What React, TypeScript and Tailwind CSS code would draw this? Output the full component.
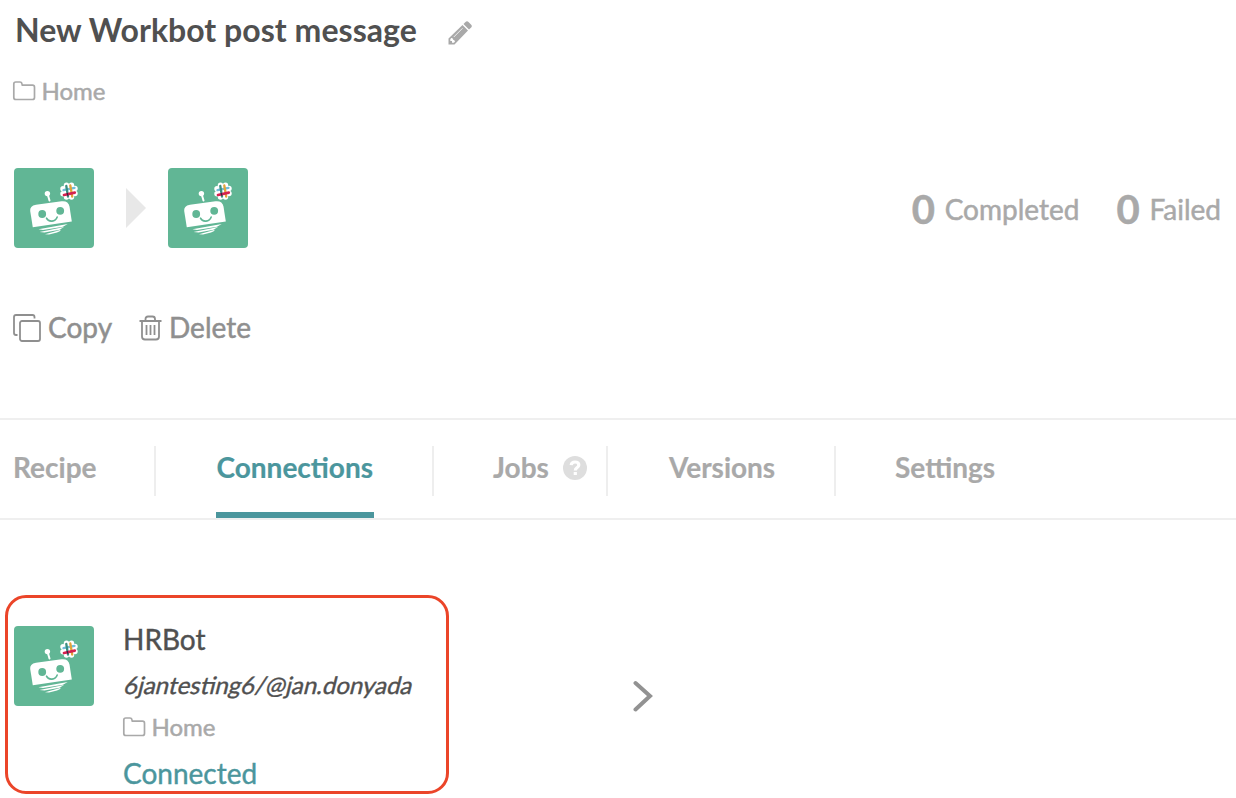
import type { ReactNode } from "react";

function BotIcon() {
  return (
    <svg viewBox="0 0 80 80" className="block size-20 shrink-0 rounded bg-[#61b695]">
      <path fill="#fff" d="M16.200 43Q15.500 38 22 36.800L47.500 33.300Q54.200 32.500 55.500 38.500L57.800 53.500L18.800 59.300Z" />
      <circle cx="33.400" cy="25.600" r="2.700" fill="#fff" />
      <path d="M33.600 26L35.500 32.500" stroke="#fff" strokeWidth="2" strokeLinecap="round" />
      <circle cx="28.200" cy="46" r="3.900" fill="#61b695" />
      <circle cx="46.200" cy="42.800" r="3.900" fill="#61b695" />
      <path d="M32.500 50.200C34.500 54.500 41.500 54 43.200 49" stroke="#61b695" strokeWidth="1.600" fill="none" strokeLinecap="round" />
      <path fill="#fff" d="M24.500 61.300L53.700 56.100L49 58.700L29 62ZM25.500 63.900L50 59L45.500 61.700L30.500 64.500ZM31 66.300L47 61.800Q46.500 63.300 43 64.500L35 66.600Z" />
      <g fill="#fff">
        <circle cx="55" cy="23.200" r="6.500" />
        <circle cx="52.500" cy="17.300" r="2.700" />
        <circle cx="57.500" cy="17.200" r="2.700" />
        <circle cx="61" cy="20.500" r="2.700" />
        <circle cx="61" cy="25.500" r="2.700" />
        <circle cx="57.500" cy="29" r="2.700" />
        <circle cx="52.500" cy="29" r="2.700" />
        <circle cx="49" cy="25.800" r="2.700" />
        <circle cx="49" cy="20.800" r="2.700" />
      </g>
      <g strokeWidth="2.300" fill="none" strokeLinecap="round">
        <path d="M49.500 22.200L60.500 19.800" stroke="#72bddb" />
        <path d="M52.300 18L54 28.500" stroke="#3b8f80" />
        <path d="M56.300 17.500L58.200 28.500" stroke="#e0a43b" />
        <path d="M50 27L60.800 24.600" stroke="#d52350" strokeWidth="2.700" />
        <path d="M52.800 26.400L54.200 26.100" stroke="#422047" strokeWidth="2.700" strokeLinecap="butt" />
      </g>
    </svg>
  );
}

function Folder() {
  return (
    <svg viewBox="0 0 24 20" className="mt-px block h-5 w-6 shrink-0" fill="none" stroke="#a9a9a9" strokeWidth="1.700">
      <path d="M1.800 16.500V3Q1.800 1 3.800 1H8Q9.500 1 9.800 2.300L10.300 4.200H20.500Q22.500 4.200 22.500 6.200V16.500Q22.500 18.500 20.500 18.500H3.800Q1.800 18.500 1.800 16.500Z" />
    </svg>
  );
}

function Home() {
  return (
    <div className="flex h-8 items-center text-[#a9a9a9]">
      <Folder />
      <span className="ml-[5.5px] pt-[2px] text-[24px] leading-8 [-webkit-text-stroke:0.5px]">Home</span>
    </div>
  );
}

function Tab({ children, className }: { children: ReactNode; className: string }) {
  return <div className={`flex h-[50px] shrink-0 items-center border-[#eee] ${className}`}>{children}</div>;
}

export default function App() {
  return (
    <main className="h-[798px] w-[1236px] overflow-hidden bg-white font-['Lato',sans-serif] text-[28px] whitespace-nowrap text-[#a9a9a9]">
      <header className="flex h-[60px] items-center pl-[15px]">
        <h1 className="w-[433px] text-[32px] leading-[40px] font-bold tracking-[0.04px] text-[#505050] [font-variant-ligatures:common-ligatures]">New Workbot post message</h1>
        <svg viewBox="0 0 24 24" className="mt-[5px] block size-6" fill="#a9a9a9">
          <path d="M17.500 1Q19 -.3 20.500 1L23.200 3.700Q24.500 5 23.200 6.500L21 8.500L15.500 3ZM14.500 4L20 9.500L6.500 23.500H0.500V17.500ZM3.200 17L2.300 18.200V20H4V21.700H5.800L7 20.700Q6.500 18.500 5 18.800Q5.200 17 3.200 17Z" fillRule="evenodd" />
          <path d="M5.800 16L14.500 7.300" stroke="#fff" strokeWidth=".8" />
        </svg>
      </header>
      <div className="flex h-[60px] items-center pl-3"><Home /></div>
      <section className="mt-[48px] flex h-20 items-center pr-[15px] pl-[14px]">
        <BotIcon />
        <svg viewBox="0 0 20 40" className="mr-[22px] ml-8 block h-10 w-5"><path d="M0 0L20 20L0 40Z" fill="#e8e8e8" /></svg>
        <BotIcon />
        <div className="ml-auto flex items-center pt-[2px] [-webkit-text-stroke:0.5px]">
          <b className="w-[33px] text-[40px] leading-[48px]">0</b>
          <span className="mr-[37px] leading-9">Completed</span>
          <b className="w-[33px] text-[40px] leading-[48px]">0</b>
          <span className="leading-9">Failed</span>
        </div>
      </section>
      <section className="mt-[60px] flex h-10 items-center pl-3 text-[#8f8f8f]">
        <svg viewBox="0 0 30 30" className="block size-[30px]" fill="none" stroke="currentColor" strokeWidth="1.800">
          <rect x="8" y="8" width="20" height="20" rx="2" />
          <path d="M5.500 22H4Q2 22 2 20V4Q2 2 4 2H20.500Q22.500 2 22.500 4V5.500" />
        </svg>
        <span className="-mt-[2px] ml-[6px] w-[90px] leading-9 [-webkit-text-stroke:0.5px]">Copy</span>
        <svg viewBox="0 0 24 26" className="block h-[26px] w-6" fill="none" stroke="currentColor" strokeWidth="1.800">
          <path d="M1.500 6H23.500M7.500 6V4Q7.500 1.500 10 1.500H14.500Q17 1.500 17 4V6M4 6V21.500Q4 24.500 7 24.500H18Q21 24.500 21 21.500V6M8.500 10V20M12.500 10V20M16.500 10V20" />
        </svg>
        <span className="-mt-[2px] ml-[7px] leading-9 [-webkit-text-stroke:0.5px]">Delete</span>
      </section>
      <nav className="mt-[70px] flex h-[102px] items-start border-y-2 border-[#efefef] pt-[26px] font-bold [-webkit-text-stroke:0.2px]">
        <Tab className="w-[156px] border-r-2 pb-[8px] pl-[13px]">Recipe</Tab>
        <Tab className="w-[278px] border-r-2 pl-[60px]">
          <span className="-mt-[4px] flex h-[98px] w-[158px] items-center border-b-[6px] border-[#4b969d] pt-[2px] pl-[0.5px] text-[#4b969d]">Connections</span>
        </Tab>
        <Tab className="w-[174px] border-r-2 pb-[8px] pl-[59px]">
          <span className="w-[70px]">Jobs</span>
          <svg viewBox="0 0 24 24" className="mt-[2px] block size-6"><circle cx="12" cy="12" r="12" fill="#dedede" /><path d="M8.200 9.200Q8.500 6 12 6Q15.800 6 15.800 9Q15.800 10.700 13.800 11.900Q12.300 12.800 12.300 14.500M12.300 16V19" fill="none" stroke="#fff" strokeWidth="3.200" /></svg>
        </Tab>
        <Tab className="w-[228px] border-r-2 pb-[8px] pl-[61px]">Versions</Tab>
        <Tab className="pb-[8px] pl-[59px]">Settings</Tab>
      </nav>
      <section className="flex pt-[75px] pl-[5px]">
        <article className="flex h-[199px] w-[443.5px] rounded-[21px] border-[3px] border-[#eb4529] pt-[28px] pl-[6px]">
          <BotIcon />
          <div className="ml-[29px] text-[#505050] [-webkit-text-stroke:0.4px]">
            <div className="-mt-[5px] h-9 leading-9">HRBot</div>
            <div className="mt-[10px] ml-[2px] h-9 w-fit -skew-x-[14deg] text-[24px] leading-9">6jantesting6/@jan.donyada</div>
            <div className="mt-[7px] -ml-[1px]"><Home /></div>
            <div className="mt-[13px] leading-9 text-[#4b969d]">Connected</div>
          </div>
        </article>
        <svg viewBox="0 0 20 32" className="mt-[85px] ml-[184px] block h-8 w-5" fill="none" stroke="#929292" strokeWidth="4" strokeLinecap="round"><path d="M2.500 3L17 16L2.500 29.500" /></svg>
      </section>
    </main>
  );
}
